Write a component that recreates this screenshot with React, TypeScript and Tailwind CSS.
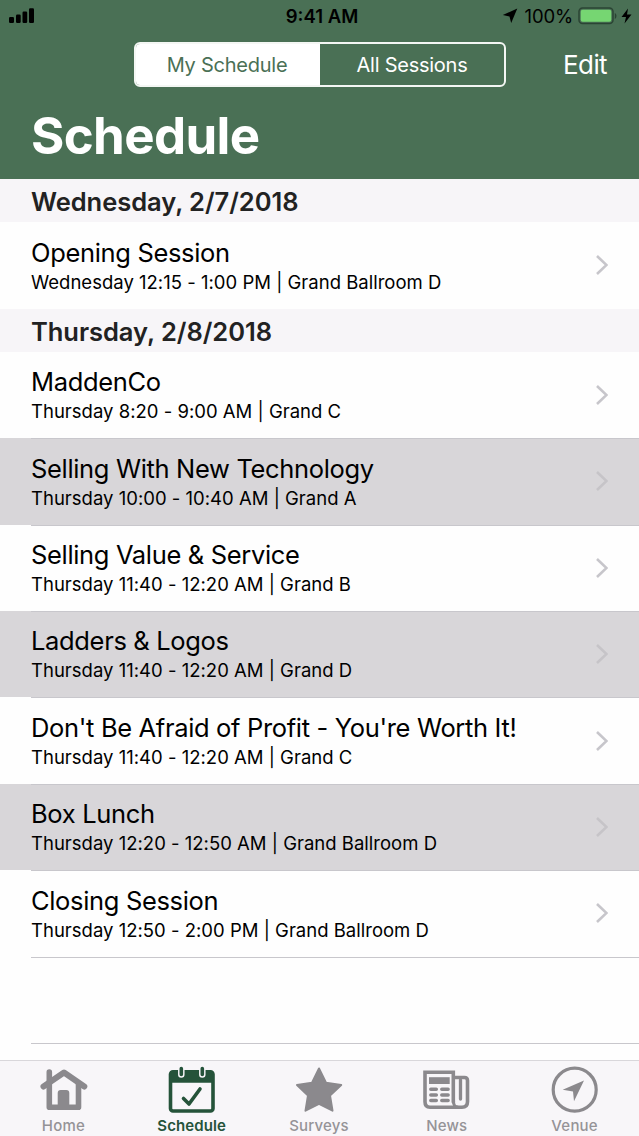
import type { ReactNode } from 'react';
import { clsx } from 'clsx';

interface Session {
	title: string;
	detail: string;
	highlighted?: boolean;
}

interface Day {
	label: string;
	sessions: Session[];
}

const days: Day[] = [
	{
		label: 'Wednesday, 2/7/2018',
		sessions: [{ title: 'Opening Session', detail: 'Wednesday 12:15 - 1:00 PM | Grand Ballroom D' }],
	},
	{
		label: 'Thursday, 2/8/2018',
		sessions: [
			{ title: 'MaddenCo', detail: 'Thursday 8:20 - 9:00 AM | Grand C' },
			{
				title: 'Selling With New Technology',
				detail: 'Thursday 10:00 - 10:40 AM | Grand A',
				highlighted: true,
			},
			{ title: 'Selling Value & Service', detail: 'Thursday 11:40 - 12:20 AM | Grand B' },
			{
				title: 'Ladders & Logos',
				detail: 'Thursday 11:40 - 12:20 AM | Grand D',
				highlighted: true,
			},
			{
				title: "Don't Be Afraid of Profit - You're Worth It!",
				detail: 'Thursday 11:40 - 12:20 AM | Grand C',
			},
			{
				title: 'Box Lunch',
				detail: 'Thursday 12:20 - 12:50 AM | Grand Ballroom D',
				highlighted: true,
			},
			{ title: 'Closing Session', detail: 'Thursday 12:50 - 2:00 PM | Grand Ballroom D' },
		],
	},
];

function StatusBar() {
	return (
		<div className="grid h-8 grid-cols-3 items-center pl-[9px] pr-[7px] text-black">
			<svg width="26" height="16" viewBox="0 0 26 16" fill="currentColor">
				<rect x="0" y="9" width="5" height="6" rx="1.200" />
				<rect x="7" y="6.500" width="4.700" height="8.500" rx="1.200" />
				<rect x="13.500" y="3.500" width="4.700" height="11.500" rx="1.200" />
				<rect x="20" y="0.300" width="5" height="14.700" rx="1.200" />
			</svg>
			<span className="pl-[3px] pt-px text-center text-[18.500px] font-semibold">9:41 AM</span>
			<div className="flex items-center justify-end">
				<svg width="16" height="16" viewBox="0 0 16 16" fill="currentColor">
					<path d="M15.300 0.600 9.200 14.900 7.500 8.500 0.800 7Z" />
				</svg>
				<span className="ml-[7px] mr-px pt-px text-[18.500px] tracking-[-0.150px]">100%</span>
				<svg className="ml-1" width="40" height="18" viewBox="0 0 40 18">
					<rect x="1" y="1" width="34" height="15.500" rx="3.500" fill="none" stroke="#2b4434" strokeWidth="1.500" />
					<rect x="2.700" y="2.700" width="30.600" height="12.100" rx="2" fill="#76d672" />
					<path d="M36.800 6v6c2.200-1 2.200-5 0-6Z" fill="#2b4434" />
				</svg>
				<svg className="ml-[3px]" width="11" height="16" viewBox="0 0 11 16" fill="currentColor">
					<path d="M7 0.500 0.500 9H5L3.500 15.500 10.500 6.500H6Z" />
				</svg>
			</div>
		</div>
	);
}

function Header() {
	return (
		<header className="h-[179px] shrink-0 bg-[#4a7055] text-white">
			<StatusBar />
			<div className="flex items-center pl-[134px] pr-8 pt-[10px]">
				<div className="flex h-[45px] w-[372px] overflow-hidden rounded-[6px] border-2 border-[#f4f7f4] text-[20px] tracking-[-0.250px]">
					<button className="w-1/2 bg-white pr-[2px] text-[#4a7055]">My Schedule</button>
					<button className="w-1/2">All Sessions</button>
				</div>
				<button className="ml-auto text-[26px] tracking-[-0.600px]">Edit</button>
			</div>
			<h1 className="pl-[31px] pt-[18px] text-[51px] font-bold leading-[62px] tracking-[-0.650px]">Schedule</h1>
		</header>
	);
}

function Divider() {
	return <div className="relative -mb-px ml-[31px] h-px bg-[#c8c7cc]" />;
}

function SessionRow({ title, detail, highlighted }: Session) {
	return (
		<div
			className={clsx(
				'flex h-[86.400px] items-center pl-[31px] pr-[31px]',
				highlighted && 'bg-[#d8d6d9]',
			)}
		>
			<div className="flex-1 pt-[1.500px]">
				<p className="text-[25.500px] leading-8 tracking-[-0.340px]">{title}</p>
				<p className="text-[18.500px] leading-[27px] tracking-[0.010px]">{detail}</p>
			</div>
			<svg
				className={highlighted ? 'text-[#c6c4c8]' : 'text-[#c7c6cb]'}
				width="12"
				height="20"
				viewBox="0 0 12 20"
				fill="none"
				stroke="currentColor"
				strokeWidth="2.600"
			>
				<path d="M1 1 10.500 10 1 19" />
			</svg>
		</div>
	);
}

function HomeIcon() {
	return (
		<svg width="48" height="48" viewBox="0 0 48 48" fill="none" stroke="currentColor" strokeLinecap="round" strokeLinejoin="round">
			<path d="M3.500 20.500 24 6.500 44.300 20.500" strokeWidth="6" />
			<path d="M9.300 6v35.200h29.200V18" strokeWidth="5.600" />
			<path d="M17.700 42V27a3 3 0 0 1 3-3h5.600a3 3 0 0 1 3 3v15Z" fill="currentColor" stroke="none" />
		</svg>
	);
}

function ScheduleIcon() {
	return (
		<svg width="48" height="48" viewBox="0 0 48 48" fill="none" stroke="currentColor" strokeLinecap="round" strokeLinejoin="round">
			<rect x="2.500" y="5.800" width="42.500" height="39.200" rx="2.500" strokeWidth="3.600" />
			<path d="M1.500 7h44.500v9.700h-44.500Z" fill="currentColor" stroke="none" />
			<path d="M13.300 2.500v6M34.300 2.500v6" stroke="#f8f6f9" strokeWidth="6.500" />
			<path d="M13.300 2.500v6M34.300 2.500v6" strokeWidth="3.600" />
			<path d="M15.500 32.500 21 38 32 23" strokeWidth="3.600" />
		</svg>
	);
}

function SurveysIcon() {
	return (
		<svg width="48" height="48" viewBox="0 0 48 48" fill="currentColor" stroke="currentColor" strokeWidth="2" strokeLinejoin="round">
			<path d="M24 2.500 31 16.800 46.200 19 35 29.500 37.500 44.700 24 37.800 10.500 44.700 13 29.500 2 19 17 16.800Z" />
		</svg>
	);
}

function NewsIcon() {
	return (
		<svg width="48" height="48" viewBox="0 0 48 48" fill="none" stroke="currentColor" strokeLinecap="round">
			<path d="M30.300 36V6.200H2v29.500c0 3.500 2 5.500 5 5.500h32c3.500 0 5.500-2 5.500-5.500V14.500c0-2-1-3-3-3H31" strokeWidth="3.600" />
			<path d="M30.500 35c0 3.500 1.500 6 4 6" strokeWidth="3" />
			<path d="M37.500 14v19" strokeWidth="3.300" />
			<path d="M6 11.200h20.700V18H6Z" fill="currentColor" stroke="none" />
			<path d="M7.800 23.300h5.500M18.800 23.300h6.300M7.800 28.900h5.500M18.800 28.900h6.300M7.800 34.400h5.500M18.800 34.400h6.300" strokeWidth="3.500" />
		</svg>
	);
}

function VenueIcon() {
	return (
		<svg width="48" height="48" viewBox="0 0 48 48" fill="none" stroke="currentColor">
			<circle cx="23.700" cy="23.700" r="21.500" strokeWidth="3.200" />
			<path d="M33 14.500 23 35.300 22 25.500 11.700 23.700Z" fill="currentColor" stroke="none" />
		</svg>
	);
}

const tabs: { label: string; icon: ReactNode; active?: boolean }[] = [
	{ label: 'Home', icon: <HomeIcon /> },
	{ label: 'Schedule', icon: <ScheduleIcon />, active: true },
	{ label: 'Surveys', icon: <SurveysIcon /> },
	{ label: 'News', icon: <NewsIcon /> },
	{ label: 'Venue', icon: <VenueIcon /> },
];

function TabBar() {
	return (
		<nav className="grid h-[76px] shrink-0 grid-cols-5 border-t border-[#d9d7db] bg-[#f8f6f9]">
			{tabs.map((tab) => (
				<button
					key={tab.label}
					className={clsx(
						'flex flex-col items-center pt-[5px]',
						tab.active ? 'text-[#25533a]' : 'text-[#8b898d]',
					)}
				>
					{tab.icon}
					<span
						className={clsx(
							'text-[15px] leading-6',
							tab.active ? 'font-semibold tracking-[0.120px]' : 'pr-px font-medium tracking-[0.200px] text-[#959397]',
						)}
					>
						{tab.label}
					</span>
				</button>
			))}
		</nav>
	);
}

export default function App() {
	return (
		<div className="flex h-[1136px] w-[639px] flex-col overflow-hidden bg-[#fefefe] font-['Inter',sans-serif] text-black">
			<Header />
			<main className="flex-1 overflow-hidden">
				{days.map((day) => (
					<section key={day.label}>
						<h2 className="h-[43.200px] bg-[#f7f5f8] pl-[31px] text-[25.500px] font-semibold leading-[45px] tracking-[-0.040px] text-[#222]">
							{day.label}
						</h2>
						<ul>
							{day.sessions.map((session, index) => (
								<li key={session.title}>
									{index > 0 && <Divider />}
									<SessionRow {...session} />
								</li>
							))}
						</ul>
					</section>
				))}
				<Divider />
				<div className="h-[86.400px]" />
				<Divider />
			</main>
			<TabBar />
		</div>
	);
}
